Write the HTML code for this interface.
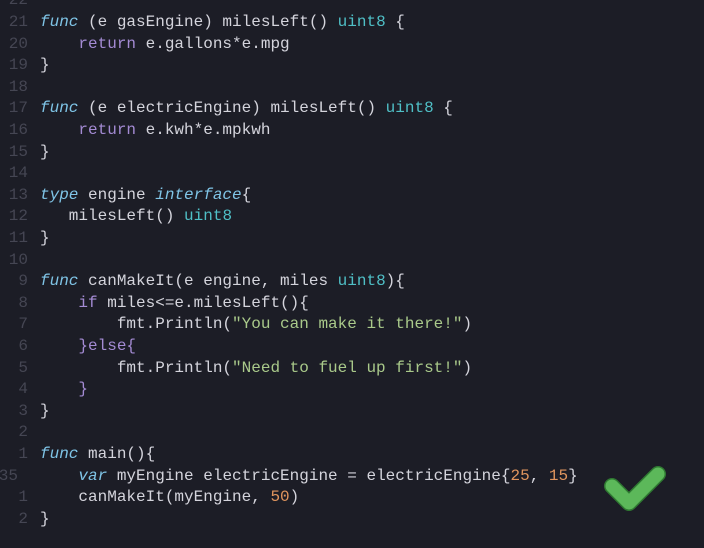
<!DOCTYPE html>
<html><head><meta charset="utf-8"><style>
html,body{margin:0;padding:0;}
body{width:704px;height:548px;background:#1c1d26;overflow:hidden;position:relative;font-family:"Liberation Mono","DejaVu Sans Mono",monospace;font-size:16px;}
.r{position:absolute;left:0;width:704px;height:22px;line-height:22px;white-space:pre;color:#d4d4dc;}
.n{position:absolute;left:0;width:28px;color:#454653;text-align:right;}
.c{position:absolute;left:40px;}
.k{color:#7fc4e6;font-style:italic;}
.p{color:#a48bd4;}
.t{color:#4fbfc6;}
.s{color:#a9c98a;}
.o{color:#e0955e;}
</style></head><body>
<div class="r" style="top:-11px"><span class="n">22</span></div>
<div class="r" style="top:11px"><span class="n">21</span><span class="c"><span class="k">func</span> (e gasEngine) milesLeft() <span class="t">uint8</span> {</span></div>
<div class="r" style="top:33px"><span class="n">20</span><span class="c">    <span class="p">return</span> e.gallons*e.mpg</span></div>
<div class="r" style="top:54px"><span class="n">19</span><span class="c">}</span></div>
<div class="r" style="top:76px"><span class="n">18</span></div>
<div class="r" style="top:97px"><span class="n">17</span><span class="c"><span class="k">func</span> (e electricEngine) milesLeft() <span class="t">uint8</span> {</span></div>
<div class="r" style="top:119px"><span class="n">16</span><span class="c">    <span class="p">return</span> e.kwh*e.mpkwh</span></div>
<div class="r" style="top:141px"><span class="n">15</span><span class="c">}</span></div>
<div class="r" style="top:162px"><span class="n">14</span></div>
<div class="r" style="top:184px"><span class="n">13</span><span class="c"><span class="k">type</span> engine <span class="k">interface</span>{</span></div>
<div class="r" style="top:205px"><span class="n">12</span><span class="c">   milesLeft() <span class="t">uint8</span></span></div>
<div class="r" style="top:227px"><span class="n">11</span><span class="c">}</span></div>
<div class="r" style="top:249px"><span class="n">10</span></div>
<div class="r" style="top:270px"><span class="n">9</span><span class="c"><span class="k">func</span> canMakeIt(e engine, miles <span class="t">uint8</span>){</span></div>
<div class="r" style="top:292px"><span class="n">8</span><span class="c">    <span class="p">if</span> miles&lt;=e.milesLeft(){</span></div>
<div class="r" style="top:313px"><span class="n">7</span><span class="c">        fmt.Println(<span class="s">"You can make it there!"</span>)</span></div>
<div class="r" style="top:335px"><span class="n">6</span><span class="c">    <span class="p">}else{</span></span></div>
<div class="r" style="top:357px"><span class="n">5</span><span class="c">        fmt.Println(<span class="s">"Need to fuel up first!"</span>)</span></div>
<div class="r" style="top:378px"><span class="n">4</span><span class="c">    <span class="p">}</span></span></div>
<div class="r" style="top:400px"><span class="n">3</span><span class="c">}</span></div>
<div class="r" style="top:421px"><span class="n">2</span></div>
<div class="r" style="top:443px"><span class="n">1</span><span class="c"><span class="k">func</span> main(){</span></div>
<div class="r" style="top:465px"><span class="n" style="left:-2px;width:20px">35</span><span class="c">    <span class="k">var</span> myEngine electricEngine = electricEngine{<span class="o">25</span>, <span class="o">15</span>}</span></div>
<div class="r" style="top:486px"><span class="n">1</span><span class="c">    canMakeIt(myEngine, <span class="o">50</span>)</span></div>
<div class="r" style="top:508px"><span class="n">2</span><span class="c">}</span></div>
<svg style="position:absolute;left:0;top:0" width="704" height="548">
<path d="M612 486 L629 503 L658 474" fill="none" stroke="#2f7a32" stroke-width="16" stroke-linecap="round" stroke-linejoin="round"/>
<path d="M612 486 L629 503 L658 474" fill="none" stroke="#5cb85a" stroke-width="13" stroke-linecap="round" stroke-linejoin="round"/>
</svg>
</body></html>
